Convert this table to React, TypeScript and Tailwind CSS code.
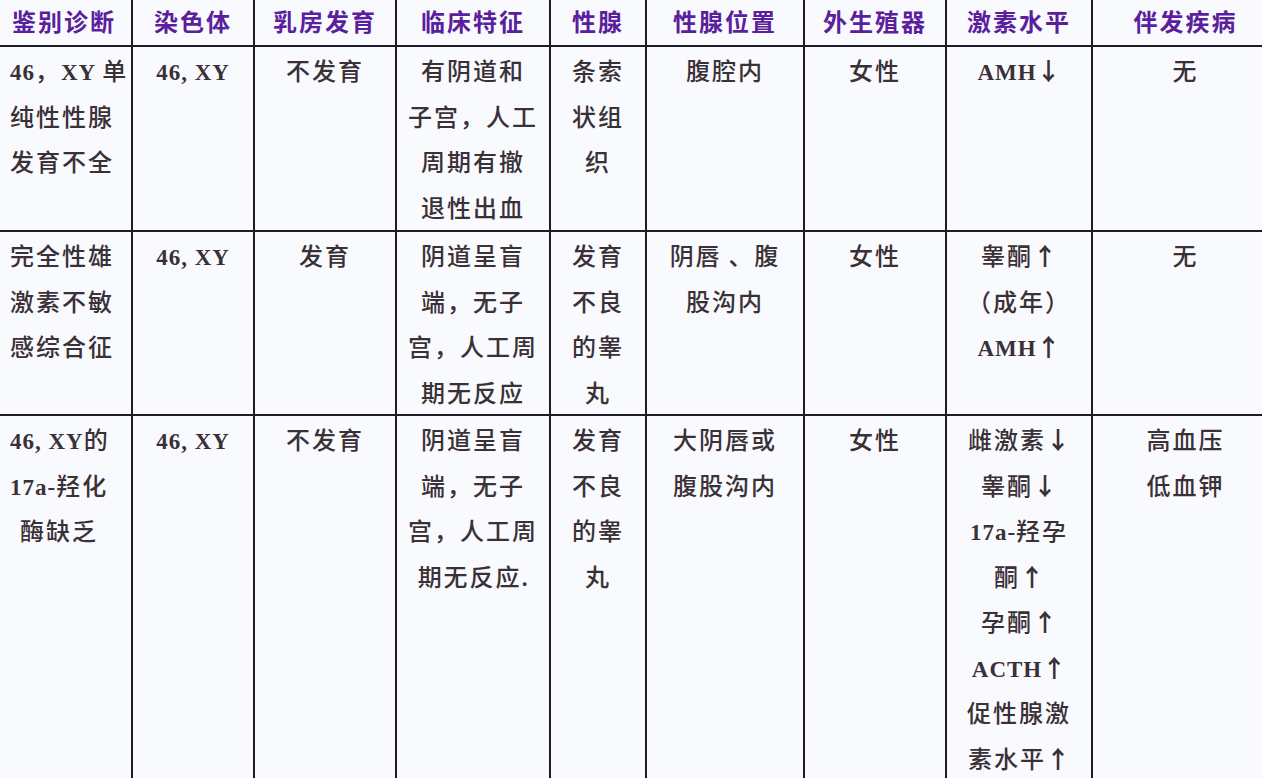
import React from "react";

type Row = { h: string; cells: string[][] };

const headers = [
  "鉴别诊断",
  "染色体",
  "乳房发育",
  "临床特征",
  "性腺",
  "性腺位置",
  "外生殖器",
  "激素水平",
  "伴发疾病",
];

const rows: Row[] = [
  {
    h: "h-[185px]",
    cells: [
      ["46，XY 单", "纯性性腺", "发育不全"],
      ["46, XY"],
      ["不发育"],
      ["有阴道和", "子宫，人工", "周期有撤", "退性出血"],
      ["条索", "状组", "织"],
      ["腹腔内"],
      ["女性"],
      ["AMH↓"],
      ["无"],
    ],
  },
  {
    h: "h-[184px]",
    cells: [
      ["完全性雄", "激素不敏", "感综合征"],
      ["46, XY"],
      ["发育"],
      ["阴道呈盲", "端，无子", "宫，人工周", "期无反应"],
      ["发育", "不良", "的睾", "丸"],
      ["阴唇 、腹", "股沟内"],
      ["女性"],
      ["睾酮↑", "（成年）", "AMH↑"],
      ["无"],
    ],
  },
  {
    h: "h-[380px]",
    cells: [
      ["46, XY的", "17a-羟化", "酶缺乏"],
      ["46, XY"],
      ["不发育"],
      ["阴道呈盲", "端，无子", "宫，人工周", "期无反应."],
      ["发育", "不良", "的睾", "丸"],
      ["大阴唇或", "腹股沟内"],
      ["女性"],
      ["雌激素↓", "睾酮↓", "17a-羟孕", "酮↑", "孕酮↑", "ACTH↑", "促性腺激", "素水平↑"],
      ["高血压", "低血钾"],
    ],
  },
];

const cols =
  "grid grid-cols-[133px_122px_142px_154px_96px_158px_142px_146px_1fr]";

function cellClass(ci: number) {
  if (ci === 0) return "pl-[10px] pr-1 text-left border-r-2 border-[#1d1b27]";
  if (ci === 8) return "pl-4 text-center";
  return "text-center border-r-2 border-[#1d1b27]";
}

// split a line into latin runs, arrows and CJK runs so each gets its own face
function Line({ text }: { text: string }) {
  const parts = text.match(/[A-Za-z0-9,.\- ]+|[↑↓]|[^A-Za-z0-9,.\- ↑↓]+/g) ?? [];
  return (
    <>
      {parts.map((p, i) => {
        if (p === "↑" || p === "↓")
          return (
            <span key={i} className="font-['Noto_Sans_CJK_SC',sans-serif] font-bold tracking-normal leading-none">
              {p}
            </span>
          );
        if (/^[A-Za-z0-9,.\- ]+$/.test(p))
          return (
            <span
              key={i}
              className="font-['Liberation_Serif',serif] font-bold tracking-[1px] text-[23px] leading-none"
            >
              {p}
            </span>
          );
        return <span key={i}>{p}</span>;
      })}
    </>
  );
}

export default function App() {
  return (
    <div className="w-[1262px] h-[778px] overflow-hidden bg-[#f9fafe]">
      <div className={`${cols} h-[47px] border-b-2 border-[#1d1b27]`}>
        {headers.map((h, i) => (
          <div
            key={h}
            className={`${cellClass(i)} ${i === 0 ? "pl-[12px]" : ""} flex items-center ${
              i === 0 ? "justify-start" : "justify-center"
            } pb-1 text-[24px] font-bold tracking-[2px] text-[#5b1f9e] font-['Noto_Sans_CJK_SC',sans-serif]`}
          >
            {h}
          </div>
        ))}
      </div>
      {rows.map((row, ri) => (
        <div key={ri} className={`${cols} ${row.h} border-b-2 border-[#1d1b27]`}>
          {row.cells.map((lines, ci) => (
            <div
              key={ci}
              className={`${cellClass(ci)} text-[24px] leading-[45.5px] tracking-[2px] font-medium text-[#3a3137] font-['Noto_Sans_CJK_SC',sans-serif] whitespace-nowrap`}
            >
              {lines.map((l, li) => (
                <div
                  key={li}
                  className={`h-[45.5px] ${
                    ci === 0 && ri === 2 && li === 2 ? "pl-[10px]" : ""
                  }`}
                >
                  <Line text={l} />
                </div>
              ))}
            </div>
          ))}
        </div>
      ))}
    </div>
  );
}
